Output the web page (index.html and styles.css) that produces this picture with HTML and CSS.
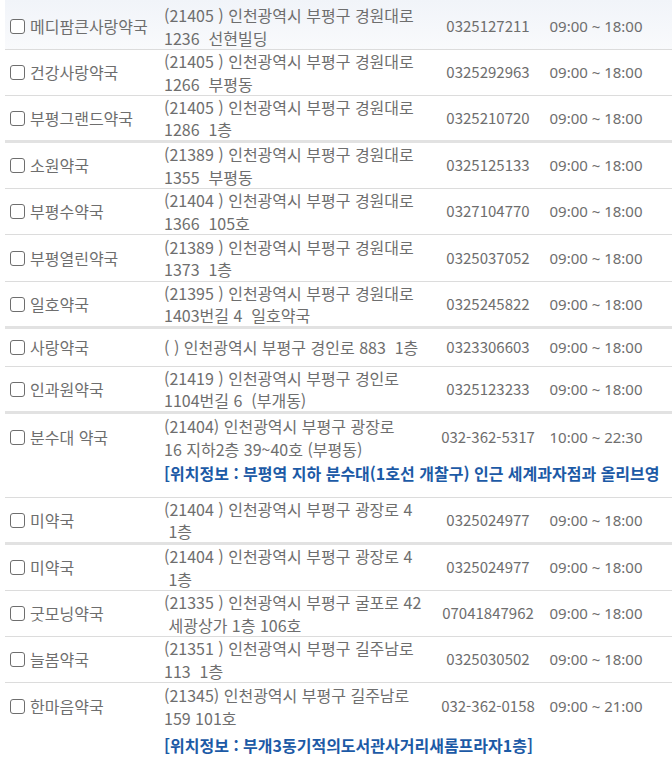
FILE: index.html
```html
<!DOCTYPE html>
<html lang="ko">
<head>
    <meta charset="UTF-8">
    <meta name="viewport" content="width=device-width, initial-scale=1.0">
    <title>약국 목록</title>
    <link rel="stylesheet" href="styles.css">
</head>

<body>
    <div class="list">
        <div class="row first">
            <div class="name"><input type="checkbox" class="chk">메디팜큰사랑약국</div>
            <div class="addr">(21405 ) 인천광역시 부평구 경원대로<br>1236 &nbsp;선현빌딩</div>
            <div class="tel">0325127211</div>
            <div class="time">09:00 ~ 18:00</div>
        </div>
        <div class="row">
            <div class="name"><input type="checkbox" class="chk">건강사랑약국</div>
            <div class="addr">(21405 ) 인천광역시 부평구 경원대로<br>1266 &nbsp;부평동</div>
            <div class="tel">0325292963</div>
            <div class="time">09:00 ~ 18:00</div>
        </div>
        <div class="row thick">
            <div class="name"><input type="checkbox" class="chk">부평그랜드약국</div>
            <div class="addr">(21405 ) 인천광역시 부평구 경원대로<br>1286 &nbsp;1층</div>
            <div class="tel">0325210720</div>
            <div class="time">09:00 ~ 18:00</div>
        </div>
        <div class="row">
            <div class="name"><input type="checkbox" class="chk">소원약국</div>
            <div class="addr">(21389 ) 인천광역시 부평구 경원대로<br>1355 &nbsp;부평동</div>
            <div class="tel">0325125133</div>
            <div class="time">09:00 ~ 18:00</div>
        </div>
        <div class="row">
            <div class="name"><input type="checkbox" class="chk">부평수약국</div>
            <div class="addr">(21404 ) 인천광역시 부평구 경원대로<br>1366 &nbsp;105호</div>
            <div class="tel">0327104770</div>
            <div class="time">09:00 ~ 18:00</div>
        </div>
        <div class="row tall">
            <div class="name"><input type="checkbox" class="chk">부평열린약국</div>
            <div class="addr">(21389 ) 인천광역시 부평구 경원대로<br>1373 &nbsp;1층</div>
            <div class="tel">0325037052</div>
            <div class="time">09:00 ~ 18:00</div>
        </div>
        <div class="row thick">
            <div class="name"><input type="checkbox" class="chk">일호약국</div>
            <div class="addr">(21395 ) 인천광역시 부평구 경원대로<br>1403번길 4 &nbsp;일호약국</div>
            <div class="tel">0325245822</div>
            <div class="time">09:00 ~ 18:00</div>
        </div>
        <div class="row single">
            <div class="name"><input type="checkbox" class="chk">사랑약국</div>
            <div class="addr">( ) 인천광역시 부평구 경인로 883 &nbsp;1층</div>
            <div class="tel">0323306603</div>
            <div class="time">09:00 ~ 18:00</div>
        </div>
        <div class="row thick">
            <div class="name"><input type="checkbox" class="chk">인과원약국</div>
            <div class="addr">(21419 ) 인천광역시 부평구 경인로<br>1104번길 6 &nbsp;(부개동)</div>
            <div class="tel">0325123233</div>
            <div class="time">09:00 ~ 18:00</div>
        </div>
        <div class="row with-loc">
            <div class="main">
                <div class="name"><input type="checkbox" class="chk">분수대 약국</div>
                <div class="addr">(21404) 인천광역시 부평구 광장로<br>16 지하2층 39~40호 (부평동)</div>
                <div class="tel">032-362-5317</div>
                <div class="time">10:00 ~ 22:30</div>
            </div>
            <div class="loc">[위치정보 : 부평역 지하 분수대(1호선 개찰구) 인근 세계과자점과 올리브영 </div>
        </div>
        <div class="row thick">
            <div class="name"><input type="checkbox" class="chk">미약국</div>
            <div class="addr">(21404 ) 인천광역시 부평구 광장로 4<br>&nbsp;1층</div>
            <div class="tel">0325024977</div>
            <div class="time">09:00 ~ 18:00</div>
        </div>
        <div class="row">
            <div class="name"><input type="checkbox" class="chk">미약국</div>
            <div class="addr">(21404 ) 인천광역시 부평구 광장로 4<br>&nbsp;1층</div>
            <div class="tel">0325024977</div>
            <div class="time">09:00 ~ 18:00</div>
        </div>
        <div class="row">
            <div class="name"><input type="checkbox" class="chk">굿모닝약국</div>
            <div class="addr">(21335 ) 인천광역시 부평구 굴포로 42<br>&nbsp;세광상가 1층 106호</div>
            <div class="tel">07041847962</div>
            <div class="time">09:00 ~ 18:00</div>
        </div>
        <div class="row">
            <div class="name"><input type="checkbox" class="chk">늘봄약국</div>
            <div class="addr">(21351 ) 인천광역시 부평구 길주남로<br>113 &nbsp;1층</div>
            <div class="tel">0325030502</div>
            <div class="time">09:00 ~ 18:00</div>
        </div>
        <div class="row with-loc last">
            <div class="main">
                <div class="name"><input type="checkbox" class="chk">한마음약국</div>
                <div class="addr">(21345) 인천광역시 부평구 길주남로<br>159 101호</div>
                <div class="tel">032-362-0158</div>
                <div class="time">09:00 ~ 21:00</div>
            </div>
            <div class="loc">[위치정보 : 부개3동기적의도서관사거리새롬프라자1층]</div>
        </div>
    </div>
</body>
</html>
```

FILE: styles.css
```css
html, body {
    margin: 0;
    padding: 0;
    overflow: hidden;
}

body {
    font-family: 'Noto Sans CJK KR', 'Noto Sans', sans-serif;
    font-size: 16px;
    color: #6e6e6e;
    background: #fff;
}

.list {
    margin-left: 5px;
}

.row,
.main {
    display: flex;
    align-items: center;
}

.row {
    box-sizing: border-box;
    height: 46px;
    border-bottom: 1px solid #dcdcdc;
    line-height: 22.5px;
    white-space: nowrap;
}

.row.first {
    height: 50px;
    padding-top: 4px;
    background: linear-gradient(#f1f4f9, #f9fafc);
}

.row.tall {
    height: 47px;
}

.row.thick {
    height: 47px;
    border-bottom: 3px solid #e2e2e2;
}

.row.single {
    height: 38px;
}

.row.with-loc {
    display: block;
    height: 84px;
    padding-top: 1px;
}

.row.last {
    height: auto;
    border-bottom: none;
}

.name {
    width: 159px;
    display: flex;
    align-items: center;
}

.chk {
    appearance: none;
    box-sizing: border-box;
    width: 15px;
    height: 15px;
    margin: 0 5px 0 5px;
    border: 1.5px solid #6e6e6e;
    border-radius: 3px;
    background: #fff;
}

.addr {
    width: 272px;
}

.tel {
    width: 104px;
    font-size: 15px;
    text-align: center;
}

.time {
    width: 112px;
    font-family: 'Noto Sans', 'Noto Sans CJK KR', sans-serif;
    font-size: 15px;
    text-align: center;
}

.loc {
    margin: 2px 0 0 159px;
    font-weight: 700;
    font-size: 16px;
    color: #1c5aa6;
    line-height: 22px;
}

.last .loc {
    margin-top: 5px;
}
```
